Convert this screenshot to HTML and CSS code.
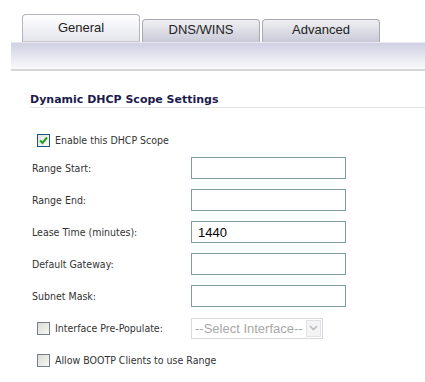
FILE: index.html
```html
<!DOCTYPE html>
<html lang="en">
<head>
    <meta charset="UTF-8">
    <meta name="viewport" content="width=device-width, initial-scale=1.0">
    <title>DHCP Scope</title>
    <link rel="stylesheet" href="styles.css">
</head>
<body>
    <div class="tabs">
        <div class="tab active">General</div>
        <div class="tab">DNS/WINS</div>
        <div class="tab">Advanced</div>
    </div>
    <div class="tab-strip"></div>

    <h2 class="section-title">Dynamic DHCP Scope Settings</h2>

    <div class="form">
        <div class="check-row full">
            <span class="box checked">
                <svg width="11" height="11" viewBox="0 0 11 11"><path d="M2 5.5 L4.5 8 L9 2.5" fill="none" stroke="#21a121" stroke-width="2"/></svg>
            </span>
            <span>Enable this DHCP Scope</span>
        </div>

        <label class="label">Range Start:</label>
        <input class="field" type="text">

        <label class="label">Range End:</label>
        <input class="field" type="text">

        <label class="label">Lease Time (minutes):</label>
        <input class="field" type="text" value="1440">

        <label class="label">Default Gateway:</label>
        <input class="field" type="text">

        <label class="label">Subnet Mask:</label>
        <input class="field" type="text">

        <div class="check-row">
            <span class="box"></span>
            <span>Interface Pre-Populate:</span>
        </div>
        <div class="select">
            <span class="select-text">--Select Interface--</span>
            <span class="select-btn">
                <svg width="9" height="6" viewBox="0 0 9 6"><path d="M1 1 L4.5 4.5 L8 1" fill="none" stroke="#b8bcc0" stroke-width="1.6"/></svg>
            </span>
        </div>

        <div class="check-row full">
            <span class="box"></span>
            <span>Allow BOOTP Clients to use Range</span>
        </div>
    </div>
</body>
</html>
```

FILE: styles.css
```css
body {
    margin: 0;
    padding: 0;
    background: #fff;
    font-family: "DejaVu Sans Condensed", "DejaVu Sans", Verdana, sans-serif;
    font-size: 10.5px;
    color: #333;
}
.tabs {
    display: flex;
    align-items: flex-end;
    gap: 2px;
    padding: 14px 0 0 22px;
    height: 42px;
    box-sizing: border-box;
}
.tab {
    width: 118px;
    height: 23px;
    box-sizing: border-box;
    border: 1px solid #a9a9b3;
    border-bottom: none;
    border-radius: 4px 4px 0 0;
    background: linear-gradient(#f0f0f2, #c9cad8);
    font-family: "Liberation Sans", Arial, sans-serif;
    font-size: 13px;
    color: #222;
    text-align: center;
    line-height: 20px;
}
.tab.active {
    height: 28px;
    line-height: 25px;
    border-color: #b4b4bc;
    background: linear-gradient(#ffffff, #e4e5ec);
    border-bottom: 1px solid #c8c8cc;
}
.tab-strip {
    margin-left: 11px;
    height: 26px;
    background: linear-gradient(#cfd1e3, #fafafc);
    border-top: 1px solid #e8e8ee;
    border-bottom: 2px solid #d6d6d6;
}
.section-title {
    margin: 23px 0 0 30px;
    padding-bottom: 1px;
    font-family: "DejaVu Sans", Verdana, sans-serif;
    font-size: 11px;
    line-height: 12px;
    font-weight: bold;
    color: #1c1c4c;
    border-bottom: 1px solid #e4e4e4;
}
.form {
    display: grid;
    grid-template-columns: 159px 155px;
    grid-template-rows: 14px;
    grid-auto-rows: 22px;
    row-gap: 10px;
    margin: 25px 0 0 32px;
    align-items: center;
}
.check-row {
    display: flex;
    align-items: center;
    gap: 5px;
    padding-left: 5px;
}
.check-row.full {
    grid-column: 1 / 3;
}
.box {
    width: 13px;
    height: 13px;
    box-sizing: border-box;
    border: 1px solid #77808a;
    background: linear-gradient(135deg, #dcdcd6, #f6f6f4);
    display: flex;
    align-items: center;
    justify-content: center;
}
.box.checked {
    border-color: #1c5180;
    background: linear-gradient(135deg, #e2e2dc, #fbfbfa);
}
.field {
    width: 155px;
    height: 22px;
    box-sizing: border-box;
    border: 1px solid #7f9aa8;
    padding: 0 6px;
    font-family: "Liberation Sans", Arial, sans-serif;
    font-size: 13px;
    color: #000;
    outline: none;
}
.select {
    width: 132px;
    height: 21px;
    box-sizing: border-box;
    border: 1px solid #d6dade;
    display: flex;
    align-items: center;
    justify-content: space-between;
    font-family: "Liberation Sans", Arial, sans-serif;
    font-size: 13px;
    color: #a8a8a8;
}
.select-text {
    padding-left: 3px;
    white-space: nowrap;
}
.select-btn {
    width: 15px;
    height: 17px;
    margin-right: 1px;
    box-sizing: border-box;
    border: 1px solid #e0e2e6;
    background: #f4f4f4;
    display: flex;
    align-items: center;
    justify-content: center;
}
```
